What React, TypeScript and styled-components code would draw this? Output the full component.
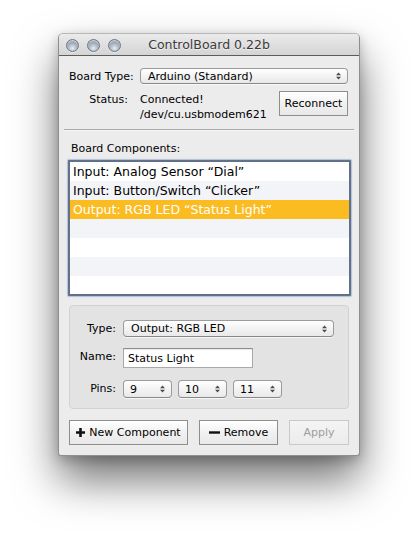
import React from "react";
import styled, { createGlobalStyle } from "styled-components";

const Global = createGlobalStyle`
  html, body { margin: 0; padding: 0; background: #ffffff; }
  body { font-family: "DejaVu Sans", "Liberation Sans", sans-serif; color: #000; }
  * { box-sizing: border-box; }
`;

const Page = styled.div`
  width: 418px;
  height: 538px;
  padding: 33px 0 0 58px;
  overflow: hidden;
`;

const Window = styled.div`
  width: 302px;
  height: 423px;
  background: #ececec;
  border: 1px solid #8e8e8e;
  border-top-color: #b8b8b8;
  border-radius: 5px 5px 3px 3px;
  box-shadow: 0 24px 44px rgba(0, 0, 0, 0.55), 0 4px 12px rgba(0, 0, 0, 0.22);
  display: flex;
  flex-direction: column;
  overflow: hidden;
`;

const TitleBar = styled.div`
  position: relative;
  height: 22px;
  flex: none;
  background: linear-gradient(#ebebeb, #d4d4d4);
  border-bottom: 1px solid #5c5c5c;
  display: flex;
  align-items: center;
  justify-content: center;
  font-size: 12.5px;
  color: #3a3a3a;
  text-shadow: 0 1px 0 rgba(255, 255, 255, 0.6);
`;

const Lights = styled.div`
  position: absolute;
  left: 7px;
  top: 5px;
  display: flex;
  gap: 8px;
`;

const Light = styled.span`
  width: 13px;
  height: 13px;
  border-radius: 50%;
  border: 1px solid #6d7682;
  background: radial-gradient(circle at 50% 75%, #e7edf3 0%, #aab5c2 45%, #7a8592 100%);
  box-shadow: inset 0 1px 1px rgba(255, 255, 255, 0.7), 0 1px 0 rgba(255, 255, 255, 0.5);
`;

const Body = styled.div`
  flex: 1;
  display: flex;
  flex-direction: column;
  padding: 12px 0 0 0;
`;

const TopGrid = styled.div`
  display: grid;
  grid-template-columns: 59px 1fr;
  column-gap: 12px;
  row-gap: 7px;
  padding: 0 11px 0 10px;
  font-size: 11px;
`;

const Label = styled.div<{ $top?: number }>`
  text-align: right;
  white-space: nowrap;
  padding-top: ${(p) => p.$top ?? 0}px;
  line-height: 15px;
`;

const Popup = styled.div<{ $w?: number; $h?: number; $pl?: number }>`
  position: relative;
  height: ${(p) => p.$h ?? 16}px;
  width: ${(p) => (p.$w ? `${p.$w}px` : "auto")};
  border: 1px solid #9c9c9c;
  border-bottom-color: #878787;
  border-radius: 4px;
  background: linear-gradient(#ffffff, #f3f3f3 50%, #e9e9e9);
  box-shadow: 0 1px 0 rgba(255, 255, 255, 0.7);
  display: flex;
  align-items: center;
  padding: 0 14px 0 ${(p) => p.$pl ?? 7}px;
  font-size: 11px;
  white-space: nowrap;
`;

const Arrows = styled.svg`
  position: absolute;
  right: 6px;
  top: 50%;
  margin-top: -4px;
`;

const UpDown = () => (
  <Arrows width="5" height="8" viewBox="0 0 5 8">
    <path d="M0 3.2 L2.5 0.4 L5 3.2 Z M0 4.8 L2.5 7.6 L5 4.8 Z" fill="#4a4a4a" />
  </Arrows>
);

const StatusRow = styled.div`
  display: flex;
  justify-content: space-between;
  align-items: flex-start;
`;

const StatusText = styled.div`
  line-height: 15px;
  padding-top: 1px;
`;

const Bevel = styled.button<{ $w: number; $disabled?: boolean }>`
  width: ${(p) => p.$w}px;
  height: 25px;
  font-family: inherit;
  font-size: 11px;
  color: ${(p) => (p.$disabled ? "#9d9d9d" : "#000")};
  border: 1px solid ${(p) => (p.$disabled ? "#c9c9c9" : "#8e8e8e")};
  border-radius: 0;
  background: ${(p) =>
    p.$disabled ? "linear-gradient(#f4f4f4, #ececec)" : "linear-gradient(#ffffff, #f1f1f1 50%, #e8e8e8)"};
  display: flex;
  align-items: center;
  justify-content: center;
  gap: 4px;
  padding: 0;
  white-space: nowrap;
`;

const Separator = styled.div`
  margin: 7px 5px 0 5px;
  height: 2px;
  border-top: 1px solid #a9a9a9;
  border-bottom: 1px solid #f6f6f6;
`;

const SectionTitle = styled.div`
  font-size: 11px;
  padding: 11px 0 0 12px;
  line-height: 13px;
`;

const List = styled.div`
  margin: 5px 8px 0 9px;
  height: 136px;
  border: 2px solid #62718a;
  border-radius: 1px;
  box-shadow: 0 0 1px 1px rgba(120, 150, 195, 0.5);
  background: #fff;
  display: flex;
  flex-direction: column;
  overflow: hidden;
`;

const Row = styled.div<{ $i: number; $sel?: boolean }>`
  height: 19px;
  flex: none;
  line-height: 19px;
  font-size: 12.5px;
  padding-left: 3px;
  white-space: nowrap;
  color: ${(p) => (p.$sel ? "#ffffff" : "#000")};
  background: ${(p) => (p.$sel ? "#fbbc22" : p.$i % 2 === 1 ? "#f2f4f8" : "#ffffff")};
`;

const Group = styled.div`
  margin: 9px 10px 0 10px;
  height: 104px;
  border: 1px solid #d2d2d2;
  border-radius: 4px;
  background: #e3e3e3;
  display: grid;
  grid-template-columns: 46px 1fr;
  column-gap: 7px;
  align-content: start;
  padding: 14px 14px 0 0;
  font-size: 11px;
`;

const GLabel = styled.div<{ $mt: number }>`
  text-align: right;
  margin-top: ${(p) => p.$mt}px;
  line-height: 17px;
`;

const GCell = styled.div<{ $mt: number }>`
  margin-top: ${(p) => p.$mt}px;
  display: flex;
  gap: 6px;
`;

const TextField = styled.div`
  width: 130px;
  height: 20px;
  background: #fff;
  border: 1px solid #a9a9a9;
  border-top-color: #8d8d8d;
  box-shadow: inset 0 1px 1px rgba(0, 0, 0, 0.1);
  display: flex;
  align-items: center;
  padding-left: 4px;
  font-size: 11px;
`;

const Buttons = styled.div`
  display: flex;
  gap: 11px;
  padding: 11px 10px 0 10px;
`;

const PlusIcon = () => (
  <svg width="9" height="9" viewBox="0 0 9 9">
    <path d="M3.2 0 H5.8 V3.2 H9 V5.8 H5.8 V9 H3.2 V5.8 H0 V3.2 H3.2 Z" fill="#111" />
  </svg>
);

const MinusIcon = () => (
  <svg width="11" height="9" viewBox="0 0 11 9">
    <rect x="0" y="3.3" width="11" height="2.4" fill="#111" />
  </svg>
);

const items = [
  "Input: Analog Sensor \u201cDial\u201d",
  "Input: Button/Switch \u201cClicker\u201d",
  "Output: RGB LED \u201cStatus Light\u201d",
  "",
  "",
  "",
  "",
];

export default function App() {
  return (
    <Page>
      <Global />
      <Window>
        <TitleBar>
          <Lights>
            <Light />
            <Light />
            <Light />
          </Lights>
          ControlBoard 0.22b
        </TitleBar>
        <Body>
          <TopGrid>
            <Label $top={1}>Board Type:</Label>
            <Popup>
              Arduino (Standard)
              <UpDown />
            </Popup>
            <Label $top={1}>Status:</Label>
            <StatusRow>
              <StatusText>
                Connected!
                <br />
                /dev/cu.usbmodem621
              </StatusText>
              <Bevel $w={69}>Reconnect</Bevel>
            </StatusRow>
          </TopGrid>
          <Separator />
          <SectionTitle>Board Components:</SectionTitle>
          <List>
            {items.map((t, i) => (
              <Row key={i} $i={i} $sel={i === 2}>
                {t}
              </Row>
            ))}
          </List>
          <Group>
            <GLabel $mt={0}>Type:</GLabel>
            <GCell $mt={0}>
              <Popup $w={211} $h={17}>
                Output: RGB LED
                <UpDown />
              </Popup>
            </GCell>
            <GLabel $mt={11}>Name:</GLabel>
            <GCell $mt={11}>
              <TextField>Status Light</TextField>
            </GCell>
            <GLabel $mt={12}>Pins:</GLabel>
            <GCell $mt={12}>
              <Popup $w={49} $h={18} $pl={6}>
                9
                <UpDown />
              </Popup>
              <Popup $w={49} $h={18} $pl={6}>
                10
                <UpDown />
              </Popup>
              <Popup $w={49} $h={18} $pl={6}>
                11
                <UpDown />
              </Popup>
            </GCell>
          </Group>
          <Buttons>
            <Bevel $w={119}>
              <PlusIcon />
              New Component
            </Bevel>
            <Bevel $w={79}>
              <MinusIcon />
              Remove
            </Bevel>
            <Bevel $w={60} $disabled>
              Apply
            </Bevel>
          </Buttons>
        </Body>
      </Window>
    </Page>
  );
}
